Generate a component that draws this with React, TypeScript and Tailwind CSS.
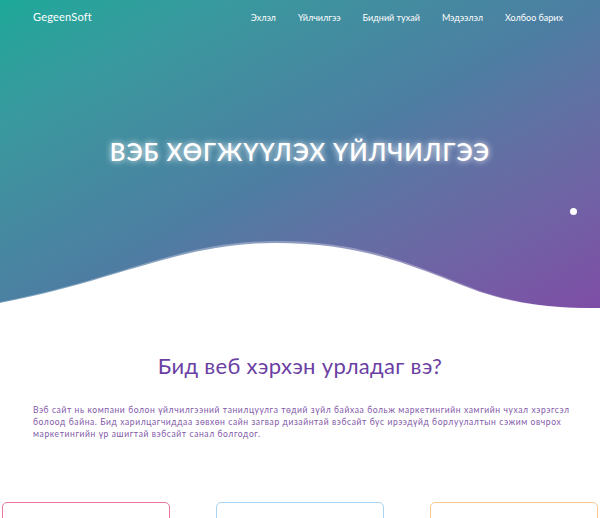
import React from 'react';

export default function App() {
  const links = ['Эхлэл', 'Үйлчилгээ', 'Бидний тухай', 'Мэдээлэл', 'Холбоо барих'];

  return (
    <div className="w-[600px] h-[518px] overflow-hidden bg-white font-['Lato',sans-serif]">
      {/* Hero */}
      <section className="relative h-[318px] bg-gradient-to-br from-[#1ca99a] via-[#4c7ea2] to-[#7f4ba6]">
        <nav className="flex items-center justify-between pl-[33px] pr-[37px] pt-[9px]">
          <span className="text-white text-[11px] tracking-[0.2px]">GegeenSoft</span>
          <ul className="flex gap-[22px] text-white text-[9px]">
            {links.map((l) => (
              <li key={l}>{l}</li>
            ))}
          </ul>
        </nav>

        <h1 className="mt-[108px] text-center text-white text-[24px] font-semibold tracking-[1px] [text-shadow:0_0_6px_rgba(255,255,255,0.95)]">
          ВЭБ ХӨГЖҮҮЛЭХ ҮЙЛЧИЛГЭЭ
        </h1>

        {/* dot */}
        <div className="absolute left-[570px] top-[208px] w-[7px] h-[7px] rounded-full bg-white" />

        {/* wave */}
        <svg className="absolute left-0 bottom-0" width="600" height="80" viewBox="0 238 600 80">
          <path
            d="M0,302 C120,279 180,241 275,241 C370,241 420,268 480,291 C530,308 570,308 600,308 L600,318 L0,318 Z"
            fill="#ffffff"
            opacity="0.3"
          />
          <path
            d="M0,303 C120,280 180,243 275,243 C370,243 420,270 480,292 C530,308 570,308 600,308 L600,318 L0,318 Z"
            fill="#ffffff"
          />
        </svg>
      </section>

      {/* About */}
      <section className="px-[33px]">
        <h2 className="mt-[31px] text-center text-[22px] text-[#6b3fa3] tracking-[0.3px]">
          Бид веб хэрхэн урладаг вэ?
        </h2>
        <p className="mt-[22px] text-[8.5px] leading-[12px] tracking-[0.6px] whitespace-nowrap text-[#8259a8]">
          Вэб сайт нь компани болон үйлчилгээний танилцуулга төдий зүйл байхаа больж маркетингийн хамгийн чухал хэрэгсэл
          <br />
          болоод байна. Бид харилцагчиддаа зөвхөн сайн загвар дизайнтай вэбсайт бус ирээдүйд борлуулалтын сэжим овчрох
          <br />
          маркетингийн үр ашигтай вэбсайт санал болгодог.
        </p>
      </section>

      {/* Cards */}
      <div className="mt-[62px] grid grid-cols-3 gap-[46px] px-[2px]">
        <div className="h-[40px] rounded-[5px] border border-[#e8799a]" />
        <div className="h-[40px] rounded-[5px] border border-[#a8d3f3]" />
        <div className="h-[40px] rounded-[5px] border border-[#fccb8d]" />
      </div>
    </div>
  );
}
